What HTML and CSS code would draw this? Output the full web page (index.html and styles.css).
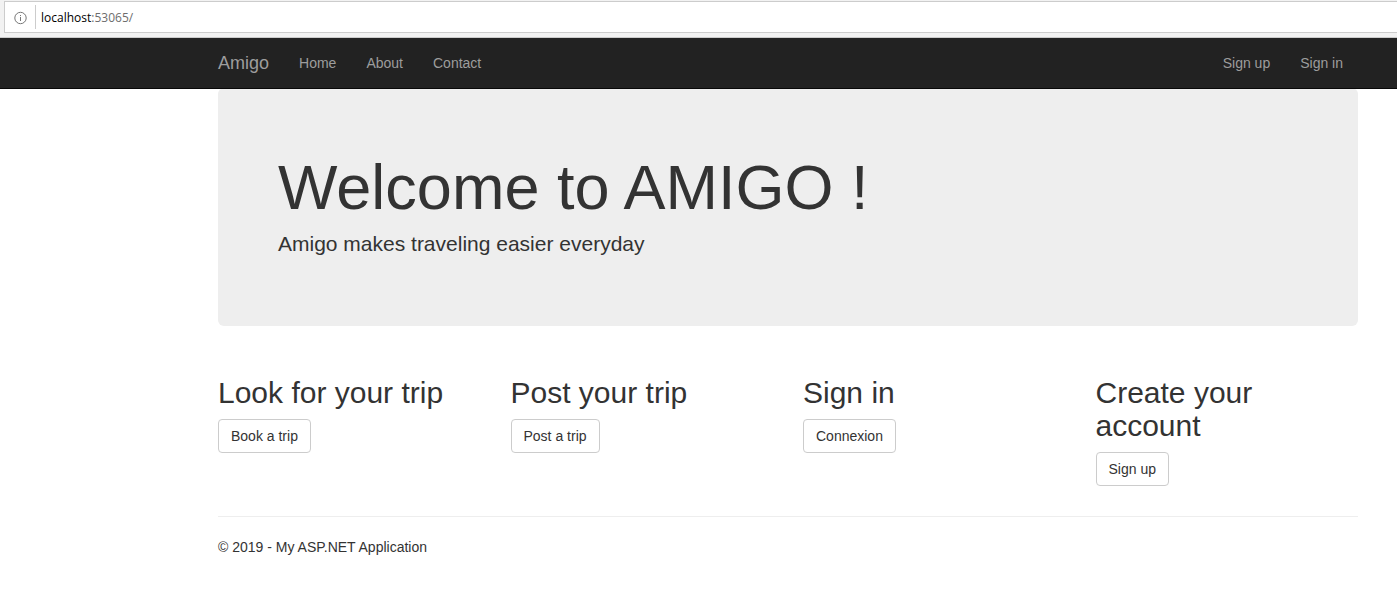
FILE: index.html
```html
<!DOCTYPE html>
<html lang="en">
<head>
<meta charset="utf-8">
<title>Amigo</title>
<link rel="stylesheet" href="styles.css">
</head>
<body>
<div class="browser-bar">
  <div class="address">
    <button class="info" type="button" aria-label="Site information">
      <svg width="14" height="14" viewBox="0 0 14 14" fill="none" stroke="#777"><circle cx="7.5" cy="8" r="5.7"/><path d="M7.5 7v4M7.5 5v1.1"/></svg>
    </button>
    <div class="url" role="textbox" aria-label="Address" contenteditable="true" spellcheck="false"><span class="host">localhost</span>:53065/</div>
  </div>
</div>
<nav class="navbar">
  <div class="container navbar-inner">
    <a class="brand" href="#">Amigo</a>
    <a class="nav-link" href="#">Home</a>
    <a class="nav-link" href="#">About</a>
    <a class="nav-link" href="#">Contact</a>
    <div class="nav-right">
      <a class="nav-link" href="#">Sign up</a>
      <a class="nav-link" href="#">Sign in</a>
    </div>
  </div>
</nav>
<main class="container">
  <section class="jumbotron">
    <h1>Welcome to AMIGO !</h1>
    <p>Amigo makes traveling easier everyday</p>
  </section>
  <section class="row">
    <div class="col"><h2>Look for your trip</h2><a class="btn" href="#">Book a trip</a></div>
    <div class="col"><h2>Post your trip</h2><a class="btn" href="#">Post a trip</a></div>
    <div class="col"><h2>Sign in</h2><a class="btn" href="#">Connexion</a></div>
    <div class="col"><h2>Create your account</h2><a class="btn" href="#">Sign up</a></div>
  </section>
  <footer class="footer"><p>© 2019 - My ASP.NET Application</p></footer>
</main>
</body>
</html>
```
FILE: styles.css
```css
* { box-sizing: border-box; }
body {
  margin: 0;
  background: #fff;
  color: #333;
  font: 14px/20px "Liberation Sans", Arial, sans-serif;
}
a { color: inherit; text-decoration: none; }
.browser-bar { padding: 1px 0 4px 4px; background: #f2f2f2; border-bottom: 1px solid #ccc; }
.address {
  display: flex;
  align-items: center;
  height: 32px;
  background: #fff;
  border: 1px solid #ccc;
  border-right: 0;
}
.info {
  display: flex;
  padding: 0 8px;
  height: 24px;
  align-items: center;
  background: none;
  border: 0;
  border-right: 1px solid #ccc;
}
.info svg { overflow: visible; }
.url {
  flex: 1;
  padding: 2px 0 0 5px;
  font: 12px/20px "Open Sans", sans-serif;
  color: #6d6d6d;
  outline: none;
}
.host { color: #000; }
.navbar { position: relative; z-index: 1; background: #222; border-bottom: 1px solid #080808; }
.container {
  max-width: 1170px;
  margin-left: 203px;
  padding: 0 15px;
}
.navbar-inner { display: flex; align-items: center; height: 50px; }
.brand { padding-right: 15px; font-size: 18px; color: #9d9d9d; }
.nav-link { padding: 15px; color: #9d9d9d; }
.nav-right { display: flex; margin-left: auto; }
.jumbotron {
  padding: 48px 60px 52px;
  margin: -1px 0 30px;
  background: #eee;
  border-radius: 6px;
}
.jumbotron h1 { margin: 20px 0 10px; font-size: 63px; line-height: 63px; font-weight: 500; }
.jumbotron p { margin: 0 0 15px; font-size: 21px; line-height: 30px; }
.row { display: grid; grid-template-columns: repeat(4, 1fr); column-gap: 30px; }
.col h2 { margin: 20px 0 10px; font-size: 30px; line-height: 33px; font-weight: 500; }
.btn {
  display: inline-block;
  padding: 6px 12px;
  border: 1px solid #ccc;
  border-radius: 4px;
  background: #fff;
}
.footer { margin-top: 30px; padding: 20px 0; border-top: 1px solid #eee; }
.footer p { margin: 0 0 10px; }
```
